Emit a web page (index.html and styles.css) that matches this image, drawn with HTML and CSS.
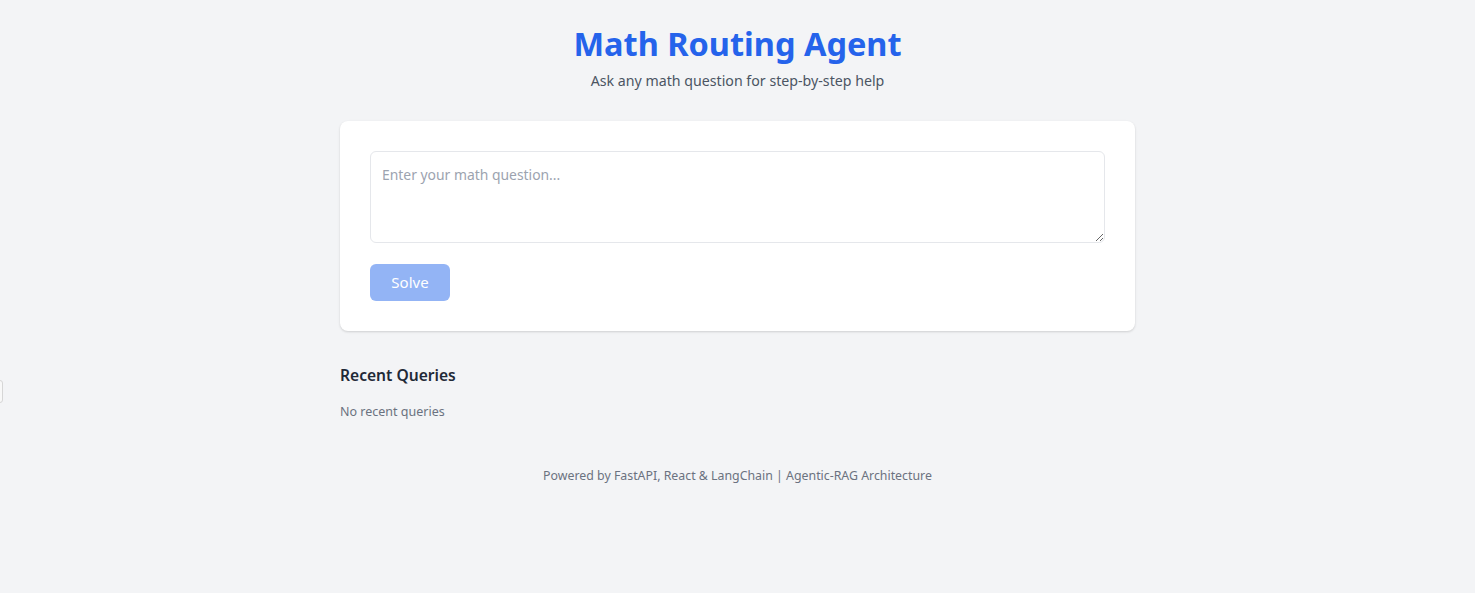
FILE: index.html
```html
<!DOCTYPE html>
<html lang="en">
<head>
<meta charset="utf-8">
<title>Math Routing Agent</title>
<link rel="stylesheet" href="styles.css">
</head>
<body>
<div class="side-tab"></div>
<main class="container">
  <header class="header">
    <h1 class="title">Math Routing Agent</h1>
    <p class="subtitle">Ask any math question for step-by-step help</p>
  </header>
  <section class="card">
    <textarea class="question" placeholder="Enter your math question..."></textarea>
    <div class="actions">
      <button class="solve" disabled>Solve</button>
    </div>
  </section>
  <section class="recent">
    <h2 class="recent-title">Recent Queries</h2>
    <p class="recent-empty">No recent queries</p>
  </section>
  <footer class="footer">Powered by FastAPI, React &amp; LangChain | Agentic-RAG Architecture</footer>
</main>
</body>
</html>
```
FILE: styles.css
```css
* { box-sizing: border-box; }
html, body { margin: 0; padding: 0; }
body {
  background: #f3f4f6;
  font-family: "Noto Sans", "Open Sans", sans-serif;
  color: #374151;
  min-height: 593px;
}
.side-tab {
  position: absolute;
  left: -6px;
  top: 380px;
  width: 9px;
  height: 23px;
  border: 1px solid #d6d6d6;
  border-radius: 3px;
  background: #f8f8f8;
}
.container {
  width: 795px;
  margin: 0 auto;
  padding-top: 22px;
}
.header { text-align: center; }
.title {
  margin: 0;
  font-size: 32.5px;
  line-height: 44px;
  font-weight: 700;
  color: #2563eb;
}
.subtitle {
  margin: 5px 0 0;
  font-size: 14.2px;
  line-height: 20px;
  color: #4b5563;
}
.card {
  margin-top: 30px;
  background: #fff;
  border-radius: 8px;
  box-shadow: 0 1px 3px rgba(0,0,0,0.1), 0 1px 2px rgba(0,0,0,0.06);
  padding: 30px;
}
.question {
  display: block;
  width: 100%;
  height: 92px;
  border: 1px solid #e5e7eb;
  border-radius: 6px;
  padding: 12px 11px;
  font-family: inherit;
  font-size: 13.9px;
  line-height: 22px;
  color: #374151;
  resize: vertical;
  outline: none;
}
.question::placeholder { color: #9ca3af; }
.actions { margin-top: 21px; display: flex; }
.solve {
  width: 80px;
  height: 37px;
  border: 0;
  border-radius: 6px;
  background: #93b4f5;
  color: #fff;
  font-family: inherit;
  font-size: 15px;
  padding: 0 0 2px;
}
.recent { margin-top: 32px; }
.recent-title {
  margin: 0;
  font-size: 15.6px;
  line-height: 24px;
  font-weight: 600;
  color: #1f2937;
}
.recent-empty {
  margin: 16px 0 0;
  font-size: 12.5px;
  line-height: 18px;
  color: #6b7280;
}
.footer {
  margin-top: 46px;
  text-align: center;
  font-size: 12.35px;
  line-height: 18px;
  color: #6b7280;
}
```
